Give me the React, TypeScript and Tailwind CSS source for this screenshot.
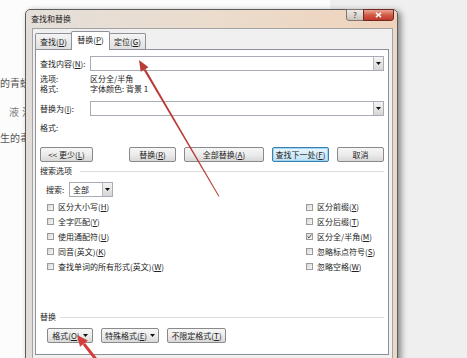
import React from "react";

const Arrow = () => (
  <svg viewBox="0 0 7 4" className="w-[5px] h-[3px]">
    <path d="M0 0 L7 0 L3.5 4 Z" fill="#111" />
  </svg>
);

const DropBtn = () => (
  <div className="w-[10px] h-full border-l border-[#b8b8b8] bg-linear-to-b from-[#f4f4f4] to-[#d6d6d6] flex items-center justify-center">
    <Arrow />
  </div>
);

const Btn = ({ w, children, def }: { w: string; children: React.ReactNode; def?: boolean }) => (
  <div
    className={
      def
        ? `${w} h-[15px] rounded-[2px] border border-[#3c7fb1] bg-linear-to-b from-[#eaf6fd] to-[#bfe3f5] shadow-[inset_0_0_0_1px_#9ed5f0] flex items-center justify-center text-[8px] leading-[10px] text-[#222]`
        : `${w} h-[15px] rounded-[2px] border border-[#8a8a8a] bg-linear-to-b from-[#f6f6f6] via-[#ececec] to-[#d8d8d8] flex items-center justify-center text-[8px] leading-[10px] text-[#222]`
    }
  >
    {children}
  </div>
);

const Check = ({ on, label }: { on?: boolean; label: React.ReactNode }) => (
  <div className="flex items-center h-full">
    <div className="w-[7px] h-[7px] border border-[#9a9a9a] bg-linear-to-br from-[#d8d8d8] to-[#f8f8f8] flex items-center justify-center">
      {on && (
        <svg viewBox="0 0 8 8" className="w-[7px] h-[7px]">
          <path d="M1 4 L3 6.5 L7 1" stroke="#333" strokeWidth="1.3" fill="none" />
        </svg>
      )}
    </div>
    <span className="ml-[4px] text-[8px] leading-[10px] text-[#222] whitespace-nowrap">{label}</span>
  </div>
);

export default function App() {
  return (
    <div className="relative w-[467px] h-[358px] overflow-hidden font-['Noto_Sans_CJK_SC','Liberation_Sans',sans-serif] bg-[#f1f1f1]">
      {/* background page */}
      <div className="flex h-full">
        <div className="w-[330px] h-full bg-[#fcfcfc] pt-[77px] text-[10px] leading-[12px] text-[#555] whitespace-nowrap">
          <div>的青蛙卵</div>
          <div className="mt-[17px] flex gap-[3px] pl-[9px] text-[#777]">
            <span>液</span>
            <span>注</span>
          </div>
          <div className="mt-[14px]">生的毒素</div>
        </div>
        <div className="flex-1 h-full bg-[#efefef]" />
      </div>

      {/* dialog */}
      <div className="absolute left-[25px] top-[9px] w-[373px] h-[360px] border border-[#5c5c5c] rounded-t-[5px] bg-linear-to-r from-[#e2ddd8] via-[#e6ddd3] to-[#e9d9ca] shadow-[3px_2px_6px_rgba(0,0,0,0.45)] flex flex-col">
        {/* title bar */}
        <div className="h-[18px] flex items-start bg-linear-to-r from-[#e4dfda] via-[#ebdccd] to-[#efd3bb] rounded-t-[5px]">
          <div className="pl-[5px] pt-[4px] text-[8px] leading-[10px] text-[#222]">查找和替换</div>
          <div className="ml-auto mr-[3px] -mt-px flex">
            <div className="w-[18px] h-[12px] border border-[#7d7770] rounded-bl-[3px] bg-linear-to-b from-[#eeeae6] to-[#cbc4bc] flex items-center justify-center text-[8px] leading-[8px] text-[#333]">
              ?
            </div>
            <div className="w-[31px] h-[12px] -ml-px border border-[#6e2a21] rounded-br-[3px] bg-linear-to-b from-[#e9a597] via-[#d25a45] to-[#c0382a] flex items-center justify-center">
              <svg viewBox="0 0 8 7" className="w-[7px] h-[6px]">
                <path d="M1 1 L7 6 M7 1 L1 6" stroke="#fff" strokeWidth="1.6" />
              </svg>
            </div>
          </div>
        </div>

        {/* body */}
        <div className="flex-1 flex pl-[6px] pr-[4px]">
          <div className="flex-1 border-x border-t border-[#a3a3a3] bg-[#f0f0f0] pt-[2px] pl-[2px] pr-[3px] flex flex-col">
            {/* tabs */}
            <div className="flex items-end h-[18px]">
              <div className="w-[37px] h-[16px] border border-b-0 border-[#8e9199] rounded-t-[2px] bg-linear-to-b from-[#f4f4f4] to-[#e0e0e0] flex items-center justify-center text-[8px] leading-[10px] text-[#222]">
                查找(<u>D</u>)
              </div>
              <div className="relative z-10 w-[39px] h-[19px] -ml-px -mb-px border border-b-0 border-[#8e9199] rounded-t-[2px] bg-white flex items-center justify-center pb-[2px] text-[8px] leading-[10px] text-[#222]">
                替换(<u>P</u>)
              </div>
              <div className="w-[37px] h-[16px] -ml-px border border-b-0 border-[#8e9199] rounded-t-[2px] bg-linear-to-b from-[#f4f4f4] to-[#e0e0e0] flex items-center justify-center text-[8px] leading-[10px] text-[#222]">
                定位(<u>G</u>)
              </div>
            </div>

            {/* panel */}
            <div className="h-[306px] border border-[#8e9199] bg-white pl-[4px] pr-[4px] flex flex-col text-[8px] leading-[10px] text-[#222]">
              <div className="mt-[6px] h-[15px] flex items-center">
                <div className="w-[50px]">查找内容(<u>N</u>):</div>
                <div className="flex-1 h-full border border-[#a9acb4] bg-white flex justify-end">
                  <DropBtn />
                </div>
              </div>
              <div className="mt-[3px] h-[10px] flex">
                <div className="w-[50px]">选项:</div>
                <div>区分全/半角</div>
              </div>
              <div className="h-[10px] flex">
                <div className="w-[50px]">格式:</div>
                <div>字体颜色: 背景 1</div>
              </div>
              <div className="mt-[7px] h-[15px] flex items-center">
                <div className="w-[50px]">替换为(<u>I</u>):</div>
                <div className="flex-1 h-full border border-[#a9acb4] bg-white flex justify-end">
                  <DropBtn />
                </div>
              </div>
              <div className="mt-[7px] h-[10px] flex">
                <div className="w-[50px]">格式:</div>
              </div>

              <div className="mt-[14px] flex">
                <Btn w="w-[53px]">&lt;&lt; 更少(<u>L</u>)</Btn>
                <div className="ml-auto flex gap-[8px]">
                  <Btn w="w-[47px]">替换(<u>R</u>)</Btn>
                  <Btn w="w-[80px]">全部替换(<u>A</u>)</Btn>
                  <Btn w="w-[57px]" def>
                    查找下一处(<u>F</u>)
                  </Btn>
                  <Btn w="w-[47px]">取消</Btn>
                </div>
              </div>

              <div className="mt-[4px] h-[10px] flex items-center">
                <span>搜索选项</span>
                <div className="ml-[8px] flex-1 h-px bg-[#dcdcdc]" />
              </div>

              <div className="mt-[6px] h-[15px] flex items-center pl-[6px]">
                <div className="w-[23px]">搜索:</div>
                <div className="w-[44px] h-full border border-[#a9acb4] bg-white flex items-center justify-between">
                  <span className="pl-[3px]">全部</span>
                  <DropBtn />
                </div>
              </div>

              <div className="mt-[3px] flex pl-[7px]">
                <div className="w-[259px] flex flex-col">
                  <div className="h-[14px]"><Check label={<>区分大小写(<u>H</u>)</>} /></div>
                  <div className="h-[15px]"><Check label={<>全字匹配(<u>Y</u>)</>} /></div>
                  <div className="h-[15px]"><Check label={<>使用通配符(<u>U</u>)</>} /></div>
                  <div className="h-[15px]"><Check label={<>同音(英文)(<u>K</u>)</>} /></div>
                  <div className="h-[15px]"><Check label={<>查找单词的所有形式(英文)(<u>W</u>)</>} /></div>
                </div>
                <div className="flex flex-col">
                  <div className="h-[14px]"><Check label={<>区分前缀(<u>X</u>)</>} /></div>
                  <div className="h-[15px]"><Check label={<>区分后缀(<u>T</u>)</>} /></div>
                  <div className="h-[15px]"><Check on label={<>区分全/半角(<u>M</u>)</>} /></div>
                  <div className="h-[15px]"><Check label={<>忽略标点符号(<u>S</u>)</>} /></div>
                  <div className="h-[15px]"><Check label={<>忽略空格(<u>W</u>)</>} /></div>
                </div>
              </div>

              <div className="mt-[38px] h-[10px] flex items-center">
                <span>替换</span>
                <div className="ml-[4px] flex-1 h-px bg-[#dcdcdc]" />
              </div>

              <div className="mt-[6px] flex gap-[8px] pl-[7px]">
                <Btn w="w-[46px]">
                  <span>格式(<u>O</u>)</span>
                  <span className="ml-[3px]"><Arrow /></span>
                </Btn>
                <Btn w="w-[58px]">
                  <span>特殊格式(<u>E</u>)</span>
                  <span className="ml-[3px]"><Arrow /></span>
                </Btn>
                <Btn w="w-[59px]">不限定格式(<u>T</u>)</Btn>
              </div>
            </div>
          </div>
        </div>
      </div>

      {/* red annotation arrows */}
      <svg className="absolute inset-0 pointer-events-none" width="467" height="358" viewBox="0 0 467 358">
        <polygon points="143.6,70.1 145.6,68.9 219.4,196.2 218.6,196.7" fill="#b83b36" />
        <polygon points="139,60 148.5,67.2 140.7,71.8" fill="#b83b36" />
        <polygon points="82.7,344.8 85.1,342.9 100,362 97.6,363.9" fill="#d23d3b" />
        <polygon points="77,335 87.8,340.5 80,346.7" fill="#d23d3b" />
      </svg>
    </div>
  );
}
